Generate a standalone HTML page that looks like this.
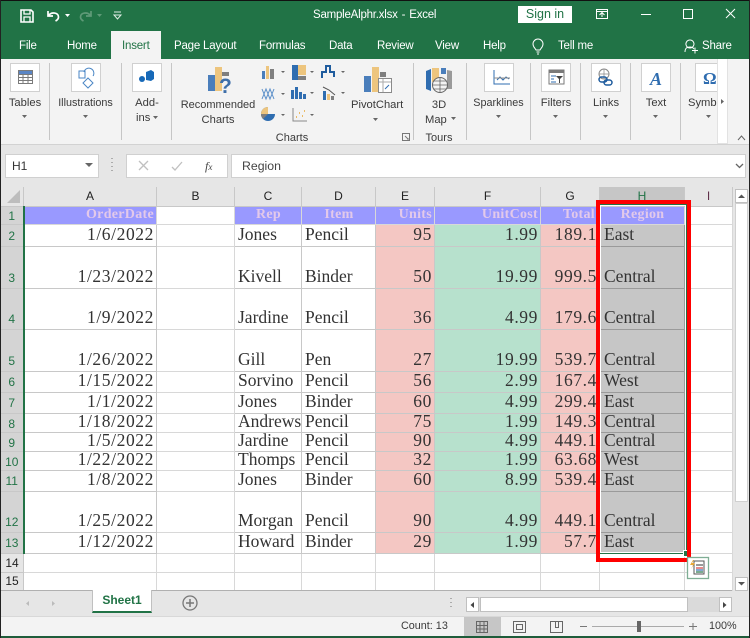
<!DOCTYPE html>
<html><head><meta charset="utf-8"><title>SampleAlphr.xlsx - Excel</title>
<style>
html,body{margin:0;padding:0}
body{width:750px;height:638px;overflow:hidden;position:relative;background:#e6e6e6;font-family:"Liberation Sans",sans-serif;color:#333}
.a{position:absolute}
.t{position:absolute;white-space:nowrap;font-size:11.2px;line-height:14px;color:#3a3a3a}
.g{color:#fff;font-size:11.5px;letter-spacing:-.2px}
.c{text-align:center}
.box{position:absolute;background:#fff;border:1px solid #d0d0d0;box-sizing:border-box;top:63px;height:29px}
.sep{position:absolute;top:63px;height:77px;width:1px;background:#c6c6c6}
table{position:absolute;left:0;top:187px;border-collapse:collapse;table-layout:fixed;width:732px}
td,th{padding:0;overflow:hidden;white-space:nowrap;box-sizing:border-box}
th{background:#e6e6e6;font:400 12px/14px "Liberation Sans",sans-serif;color:#222;border:1px solid #c8c8c8;border-top:0;text-align:center}
td{border:1px solid #d8d8d8;background:#fff;font:17.5px/15px "Liberation Serif",serif;color:#333;vertical-align:bottom;padding:0 1px 4px 3px}
td.r{text-align:right;letter-spacing:.6px;padding-right:2px}
tr.d td{border-color:#c8c8c8}
tr.d td.e,tr.h td.e{border-color:#d8d8d8}
tr.n td{padding-bottom:4px;line-height:14px}
td.p{background:#f4c7c3}
td.n{background:#b7e1cd}
td.s{background:#c6c6c6;border-color:#9a9a9a!important;padding-left:4px}
th.rh{background:#d4d4d4;color:#217346;font-size:12px;vertical-align:bottom;border-right:2px solid #217346;padding:0 0 3px 0}
th.rn{background:#e6e6e6;border-right:1px solid #c8c8c8;padding:0;color:#222;vertical-align:middle}
tr.h td{background:#9999ff;color:#e3c9ea;font:700 14px/15px "Liberation Serif",serif;padding:0 2px 1px 3px;letter-spacing:.3px;vertical-align:middle}
tr.h td.e{background:#fff}
tr.h td.c{text-align:center}
tr.h td.rr{text-align:right}
</style></head><body>
<!-- title bar -->
<div class="a" style="left:0;top:0;width:750px;height:59px;background:#217346;border-top:1px solid #111;box-sizing:border-box"></div>
<div class="a" style="left:0;top:0;width:1px;height:638px;background:#222;z-index:9"></div>
<div class="a" style="left:749px;top:0;width:1px;height:638px;background:#222;z-index:9"></div>
<div class="t g" style="left:313px;top:8px;font-size:11.5px;letter-spacing:-.22px;word-spacing:1px">SampleAlphr.xlsx&nbsp;- Excel</div>
<div class="a c" style="left:518px;top:6px;width:54px;height:17px;background:#fff;color:#217346;font-size:12.5px;line-height:17px">Sign in</div>
<div class="a" style="left:111px;top:31px;width:50px;height:29px;background:#f3f3f3"></div>
<div class="t g" style="left:19px;top:39px">File</div>
<div class="t g" style="left:67px;top:39px">Home</div>
<div class="t g" style="left:122px;top:39px;color:#217346">Insert</div>
<div class="t g" style="left:174px;top:39px">Page Layout</div>
<div class="t g" style="left:259px;top:39px">Formulas</div>
<div class="t g" style="left:329px;top:39px">Data</div>
<div class="t g" style="left:377px;top:39px">Review</div>
<div class="t g" style="left:435px;top:39px">View</div>
<div class="t g" style="left:483px;top:39px">Help</div>
<div class="t g" style="left:558px;top:39px">Tell me</div>
<div class="t g" style="left:702px;top:39px">Share</div>
<!-- ribbon -->
<div class="a" style="left:0;top:59px;width:750px;height:86px;background:#f3f3f3;border-bottom:1px solid #d2d2d2;box-sizing:border-box"></div>
<div class="sep" style="left:49px"></div><div class="sep" style="left:121px"></div><div class="sep" style="left:171px"></div>
<div class="sep" style="left:413px"></div><div class="sep" style="left:466px"></div><div class="sep" style="left:530px"></div>
<div class="sep" style="left:580px"></div><div class="sep" style="left:630px"></div><div class="sep" style="left:680px"></div>
<div class="box" style="left:10px;width:30px"></div>
<div class="box" style="left:71px;width:30px"></div>
<div class="box" style="left:132px;width:30px"></div>
<div class="box" style="left:484px;width:30px"></div>
<div class="box" style="left:541px;width:30px"></div>
<div class="box" style="left:591px;width:30px"></div>
<div class="box" style="left:641px;width:30px"></div>
<div class="box" style="left:695px;width:22px;border-right:0"></div>
<div class="a" style="left:0;top:1px;width:750px;height:0">
<div class="t c" style="left:0;width:50px;top:95px">Tables</div>
<div class="t c" style="left:50px;width:71px;top:95px;font-size:10.8px">Illustrations</div>
<div class="t c" style="left:122px;width:50px;top:95px">Add-</div>
<div class="t" style="left:136px;top:110px">ins</div>
<div class="t c" style="left:172px;width:92px;top:97px;font-size:11px">Recommended</div>
<div class="t c" style="left:172px;width:92px;top:112px">Charts</div>
<div class="t c" style="left:262px;width:60px;top:130px;font-size:11px">Charts</div>
<div class="t" style="left:351px;top:97px">PivotChart</div>
<div class="t c" style="left:414px;width:50px;top:97px">3D</div>
<div class="t" style="left:425px;top:112px">Map</div>
<div class="t c" style="left:414px;width:50px;top:130px;font-size:11px">Tours</div>
<div class="t c" style="left:467px;width:63px;top:95px;font-size:10.8px">Sparklines</div>
<div class="t c" style="left:531px;width:50px;top:95px">Filters</div>
<div class="t c" style="left:581px;width:50px;top:95px">Links</div>
<div class="t c" style="left:631px;width:50px;top:95px">Text</div>
<div class="t" style="left:688px;top:95px;width:29px;overflow:hidden">Symbols</div>
</div>
<div class="a" style="left:717px;top:59px;width:11px;height:85px;background:#fff;border:1px solid #e2e2e2;border-top:0;box-sizing:border-box"></div>
<!-- formula bar -->
<div class="a" style="left:5px;top:154px;width:94px;height:24px;background:#fff;border:1px solid #d0d0d0;box-sizing:border-box;font-size:12px;line-height:22px;padding-left:6px;color:#333">H1</div>
<div class="a" style="left:126px;top:154px;width:102px;height:24px;background:#fff;border:1px solid #d0d0d0;box-sizing:border-box"></div>
<div class="a" style="left:231px;top:154px;width:515px;height:24px;background:#fff;border:1px solid #d0d0d0;box-sizing:border-box;font-size:12.3px;line-height:22px;padding-left:10px;color:#444">Region</div>
<div class="t" style="left:205px;top:159px;font:italic 12px/14px 'Liberation Serif',serif;color:#444">f<span style="font-size:9px">x</span></div>
<!-- sheet -->
<table>
<colgroup><col style="width:23px"><col style="width:133px"><col style="width:78px"><col style="width:67px"><col style="width:74px"><col style="width:59px"><col style="width:106px"><col style="width:59px"><col style="width:85px"><col style="width:48px"></colgroup>
<tr style="height:19px"><th style="border-left:0"></th><th>A</th><th>B</th><th>C</th><th>D</th><th>E</th><th>F</th><th>G</th><th style="background:#c6c6c6;color:#217346">H</th><th style="color:#60304a">I</th></tr>
<tr class="h" style="height:18px"><th class="rh" style="padding-bottom:1px">1</th><td class="rr">OrderDate</td><td class="e"></td><td class="c">Rep</td><td class="c">Item</td><td class="rr">Units</td><td class="rr">UnitCost</td><td class="rr" style="padding-right:4px">Total</td><td class="c">Region</td><td class="e"></td></tr>
<tr class="d" style="height:22px"><th class="rh">2</th><td class="r">1/6/2022</td><td class="e"></td><td>Jones</td><td>Pencil</td><td class="r p">95</td><td class="r n">1.99</td><td class="r p">189.1</td><td class="s">East</td><td class="e"></td></tr>
<tr class="d" style="height:42px"><th class="rh">3</th><td class="r">1/23/2022</td><td class="e"></td><td>Kivell</td><td>Binder</td><td class="r p">50</td><td class="r n">19.99</td><td class="r p">999.5</td><td class="s">Central</td><td class="e"></td></tr>
<tr class="d" style="height:41px"><th class="rh">4</th><td class="r">1/9/2022</td><td class="e"></td><td>Jardine</td><td>Pencil</td><td class="r p">36</td><td class="r n">4.99</td><td class="r p">179.6</td><td class="s">Central</td><td class="e"></td></tr>
<tr class="d" style="height:42px"><th class="rh">5</th><td class="r">1/26/2022</td><td class="e"></td><td>Gill</td><td>Pen</td><td class="r p">27</td><td class="r n">19.99</td><td class="r p">539.7</td><td class="s">Central</td><td class="e"></td></tr>
<tr class="d" style="height:21px"><th class="rh">6</th><td class="r">1/15/2022</td><td class="e"></td><td>Sorvino</td><td>Pencil</td><td class="r p">56</td><td class="r n">2.99</td><td class="r p">167.4</td><td class="s">West</td><td class="e"></td></tr>
<tr class="d" style="height:21px"><th class="rh">7</th><td class="r">1/1/2022</td><td class="e"></td><td>Jones</td><td>Binder</td><td class="r p">60</td><td class="r n">4.99</td><td class="r p">299.4</td><td class="s">East</td><td class="e"></td></tr>
<tr class="d n" style="height:18px"><th class="rh" style="padding-bottom:1px">8</th><td class="r">1/18/2022</td><td class="e"></td><td>Andrews</td><td>Pencil</td><td class="r p">75</td><td class="r n">1.99</td><td class="r p">149.3</td><td class="s">Central</td><td class="e"></td></tr>
<tr class="d n" style="height:19px"><th class="rh" style="padding-bottom:1px">9</th><td class="r">1/5/2022</td><td class="e"></td><td>Jardine</td><td>Pencil</td><td class="r p">90</td><td class="r n">4.99</td><td class="r p">449.1</td><td class="s">Central</td><td class="e"></td></tr>
<tr class="d n" style="height:19px"><th class="rh" style="padding-bottom:1px">10</th><td class="r">1/22/2022</td><td class="e"></td><td>Thomps</td><td>Pencil</td><td class="r p">32</td><td class="r n">1.99</td><td class="r p">63.68</td><td class="s">West</td><td class="e"></td></tr>
<tr class="d" style="height:21px"><th class="rh">11</th><td class="r">1/8/2022</td><td class="e"></td><td>Jones</td><td>Binder</td><td class="r p">60</td><td class="r n">8.99</td><td class="r p">539.4</td><td class="s">East</td><td class="e"></td></tr>
<tr class="d" style="height:41px"><th class="rh">12</th><td class="r">1/25/2022</td><td class="e"></td><td>Morgan</td><td>Pencil</td><td class="r p">90</td><td class="r n">4.99</td><td class="r p">449.1</td><td class="s">Central</td><td class="e"></td></tr>
<tr class="d" style="height:21px"><th class="rh">13</th><td class="r">1/12/2022</td><td class="e"></td><td>Howard</td><td>Binder</td><td class="r p">29</td><td class="r n">1.99</td><td class="r p">57.7</td><td class="s">East</td><td class="e"></td></tr>
<tr style="height:19px"><th class="rn">14</th><td></td><td></td><td></td><td></td><td></td><td></td><td></td><td></td><td></td></tr>
<tr style="height:18px"><th class="rn">15</th><td></td><td></td><td></td><td></td><td></td><td></td><td></td><td></td><td></td></tr>
</table>
<!-- selection & red box -->
<div class="a" style="left:599px;top:204px;width:88px;height:350px;border:1px solid #217346;outline:1px solid #fff;outline-offset:-2px;box-sizing:border-box"></div>
<div class="a" style="left:683px;top:550px;width:5px;height:5px;background:#217346;border:1px solid #fff"></div>
<div class="a" style="left:596px;top:200px;width:95px;height:362px;border:4px solid #f00;box-sizing:border-box"></div>
<!-- v scrollbar -->
<div class="a" style="left:735px;top:189px;width:13px;height:14px;background:#fff;border:1px solid #c0c0c0;box-sizing:border-box"></div>
<div class="a" style="left:735px;top:203px;width:13px;height:299px;background:#fff;border:1px solid #d0d0d0;box-sizing:border-box"></div>
<div class="a" style="left:735px;top:577px;width:13px;height:14px;background:#fff;border:1px solid #c0c0c0;box-sizing:border-box"></div>
<!-- sheet tabs -->
<div class="a" style="left:1px;top:590px;width:731px;height:1px;background:#b0b0b0"></div>
<div class="a" style="left:92px;top:590px;width:60px;height:23px;background:#fff;border:1px solid #c0c0c0;border-top:0;border-bottom:2px solid #217346;box-sizing:border-box;color:#217346;font-weight:700;font-size:12px;line-height:21px;text-align:center">Sheet1</div>
<div class="a" style="left:466px;top:597px;width:266px;height:15px;background:#dadada"></div>
<div class="a" style="left:466px;top:597px;width:13px;height:15px;background:#fff;border:1px solid #c0c0c0;box-sizing:border-box"></div>
<div class="a" style="left:480px;top:597px;width:208px;height:15px;background:#fff;border:1px solid #c0c0c0;box-sizing:border-box"></div>
<div class="a" style="left:719px;top:597px;width:13px;height:15px;background:#fff;border:1px solid #c0c0c0;box-sizing:border-box"></div>
<!-- status bar -->
<div class="a" style="left:0;top:616px;width:750px;height:22px;background:#f3f3f3;border-top:1px solid #d8d8d8;border-bottom:2px solid #1e5c3a;box-sizing:border-box"></div>
<div class="a" style="left:464px;top:617px;width:37px;height:19px;background:#c6c6c6"></div>
<div class="t" style="left:401px;top:619px;font-size:10.8px">Count: 13</div>
<div class="t" style="left:709px;top:619px;font-size:10.8px">100%</div>
<!-- icons -->
<svg class="a" style="left:0;top:0;z-index:5" width="750" height="638" viewBox="0 0 750 638" fill="none">
<!-- save -->
<path d="M21 10h10l2 2v10H21z" stroke="#fff" stroke-width="1.6"/><path d="M24 10v4h6v-4M24 22v-5h6v5" stroke="#fff" stroke-width="1.3"/>
<!-- undo -->
<path d="M48 11v5h5M48.500 15.500c3-4 10-3 10 1.500 0 2-1 3-3 4" stroke="#fff" stroke-width="1.7"/>
<path d="M65 14h5l-2.500 3z" fill="#fff"/>
<path d="M91 11v5h-5M90.500 15.500c-3-4-10-3-10 1.500 0 2 1 3 3 4" stroke="#5f9a78" stroke-width="1.7"/>
<path d="M97 14h5l-2.500 3z" fill="#5f9a78"/>
<path d="M114 12h7M114 15h7l-3.500 4z" stroke="#dfeee6"/>
<!-- window buttons -->
<path d="M596.500 9.500h11v9h-11zM596.500 11.500h11" stroke="#fff"/><path d="M602 17v-4M599.500 15l2.500-2.500 2.500 2.500" stroke="#fff"/>
<path d="M641 14.500h10" stroke="#fff"/><path d="M683.500 9.500h9v9h-9z" stroke="#fff"/><path d="M726 9l9 9M735 9l-9 9" stroke="#fff"/>
<!-- bulb -->
<path d="M536 50c-1-2-3-3-3-6a5 5 0 0 1 10 0c0 3-2 4-3 6zM536.500 52h3M537 54h2" stroke="#fff"/>
<!-- share person -->
<path d="M690 40a4 4 0 1 1 -.1 0zM685 52c0-4 2-5 5-5 2 0 3 .5 4 2M692 50.500h6M695 47.500v6" stroke="#fff"/>
<!-- tables icon -->
<path d="M18 70h15v4H18z" fill="#5a85c4"/><path d="M18.500 70.500h14v13h-14zM18.500 74.500h14M18.500 77.500h14M18.500 80.500h14M23 74v10M28 74v10" stroke="#7a7a7a"/>
<!-- illustrations icon -->
<path d="M79 72h6v7h-6zM88 79l5 5-5 5-5-5z M84 73a5 5 0 1 1 9 4" stroke="#4a86c5" stroke-width="1" transform="translate(0,-1)"/>
<!-- addins -->
<path d="M146 72l5-2 3 2v7l-3 2-5-1z" fill="#1769b8"/><circle cx="142" cy="79" r="3" fill="#1769b8"/>
<!-- recommended charts -->
<rect x="208" y="75" width="7" height="16" fill="#4a7ebb"/><rect x="215" y="67" width="7" height="24" fill="#edc57e"/><rect x="222" y="72" width="7" height="4" fill="#7f7f7f"/>
<text x="219" y="93" font-family="Liberation Sans" font-size="21" font-weight="700" fill="#3f6fa8">?</text>
<!-- small charts -->
<path d="M262 71h3v8h-3z" fill="#4a7ebb"/><path d="M266 66h3v13h-3z" fill="#edc57e"/><path d="M270 69h4v10h-4z" fill="#7f7f7f"/><path d="M281 71h4l-2 2z" fill="#666"/>
<path d="M292 65h6v15h-6z" fill="#2f6db0"/><path d="M298 65h8v10h-8z" fill="#edc57e"/><path d="M298 76h8v4h-8z" fill="#7f7f7f"/><path d="M310 71h4l-2 2z" fill="#666"/>
<path d="M322 78v-6h4v-6h4v6h4v5" stroke="#1f5c9e" stroke-width="2"/><path d="M341 71h4l-2 2z" fill="#666"/>
<path d="M262 89l4 10 4-10 4 10M262 99l4-10 4 10 4-10" stroke="#5b8fc9"/><path d="M281 93h4l-2 2z" fill="#666"/>
<path d="M291 90h3v9h-3zM295 87h3v12h-3zM299 92h3v7h-3zM303 94h3v5h-3z" fill="#2f6db0"/><path d="M310 92h4l-2 2z" fill="#666"/>
<path d="M323 91h3v9h-3z" fill="#2f6db0"/><path d="M327 94h3v6h-3z" fill="#edc57e"/><path d="M331 96h3v4h-3z" fill="#7f7f7f"/><path d="M323 87l6 3 6 5" stroke="#555"/><path d="M341 92h4l-2 2z" fill="#666"/>
<path d="M268 107a7 7 0 1 0 7 7h-7z" fill="#2f6db0"/><path d="M268 107v7h-7a7 7 0 0 1 7-7z" fill="#edc57e"/><path d="M261 114h7l-5 5a7 7 0 0 1 -2-5z" fill="#7f7f7f"/><path d="M281 114h4l-2 2z" fill="#666"/>
<path d="M293 108v13h14" stroke="#888"/><path d="M296 117h1M299 113h1M302 116h1M304 111h1" stroke="#e8a838" stroke-width="1.500"/><path d="M310 114h4l-2 2z" fill="#666"/>
<!-- pivot chart -->
<rect x="364" y="76" width="7" height="16" fill="#4a7ebb"/><rect x="372" y="67" width="7" height="25" fill="#edc57e"/><rect x="380" y="72" width="6" height="5" fill="#7f7f7f"/>
<rect x="378.500" y="78.500" width="13" height="14" fill="#fff" stroke="#8a8a8a"/><path d="M379 82h12M383 79v13" stroke="#aaa"/><path d="M385 89l4-4" stroke="#2f6db0"/>
<!-- 3d map -->
<path d="M426 71l5-2v22l-5-2z" fill="#2f6db0"/><path d="M432 68h7v14h-7z" fill="#edc57e"/><path d="M447 70l5 1v18h-5z" fill="#9a9a9a"/><path d="M441 68h5v6h-5z" fill="#4a7ebb"/>
<circle cx="440" cy="85" r="7.500" fill="#f3f3f3" stroke="#666"/><path d="M433 85h14M440 78v14M434 81h12M434 89h12" stroke="#666" stroke-width=".8"/>
<!-- sparklines -->
<path d="M494 70v14h16M497 80l3-3 3 3 3-3 3 2" stroke="#2f6db0"/><path d="M494 78h16" stroke="#8a8a8a"/>
<!-- filters -->
<rect x="549" y="70" width="15" height="14" fill="#fff" stroke="#7a7a7a"/><rect x="549" y="70" width="15" height="3" fill="#7a7a7a"/><path d="M551 76h5M551 79h3M551 82h5" stroke="#2f6db0"/><path d="M556 76h7l-3 3v4h-1v-4z" fill="#444"/>
<!-- links -->
<circle cx="604" cy="74" r="5" stroke="#888"/><path d="M599 74h10M604 69v10" stroke="#888" stroke-width=".7"/>
<rect x="599" y="77" width="8" height="5" rx="2.500" stroke="#1f5c9e" stroke-width="1.500"/><rect x="604" y="80" width="8" height="5" rx="2.500" stroke="#1f5c9e" stroke-width="1.500"/>
<!-- text A -->
<text x="650" y="85" font-family="Liberation Serif" font-size="18" font-style="italic" font-weight="700" fill="#2f6db0">A</text>
<!-- omega -->
<text x="703" y="84" font-family="Liberation Serif" font-size="17" font-weight="700" fill="#2f6db0">Ω</text>
<!-- ribbon carets -->
<g fill="#666"><path d="M22 115h5l-2.500 3zM83 115h5l-2.500 3zM153 116h5l-2.500 3zM373 118h5l-2.500 3zM451 117h5l-2.500 3zM496 115h5l-2.500 3zM553 115h5l-2.500 3zM603 115h5l-2.500 3zM653 115h5l-2.500 3zM706 115h5l-2.500 3z"/><path d="M721 99l3 2.500-3 2.500z"/></g>
<path d="M738 140l3.500-4 3.500 4" stroke="#666"/>
<path d="M402.500 133.500h7v7h-7zM405 136l3 3M409 139h-2" stroke="#777"/>
<!-- formula bar icons -->
<path d="M85 163h8l-4 4z" fill="#666"/>
<path d="M112 158v1M112 162v1M112 166v1M112 170v1" stroke="#999" stroke-width="1.500"/>
<path d="M139 161l9 9M148 161l-9 9" stroke="#c0c0c0" stroke-width="1.300"/>
<path d="M172 167l3 3 7-8" stroke="#c0c0c0" stroke-width="1.300"/>
<path d="M736 164l3.500 3.500 3.500-3.500" stroke="#666" stroke-width="1.300"/>
<!-- corner triangle -->
<path d="M20 190v13H7z" fill="#bdbdbd"/>
<!-- scroll arrows -->
<path d="M738 198l3.500-3.500 3.500 3.500z" fill="#555"/><path d="M738 582l3.500 3.500 3.500-3.500z" fill="#555"/>
<path d="M474 602v6l-3.500-3z" fill="#444"/><path d="M723 602v6l3.500-3z" fill="#444"/>
<path d="M29 601v5l-3-2.500z" fill="#bbb"/><path d="M52 601v5l3-2.500z" fill="#bbb"/>
<path d="M451 598v1M451 602v1M451 606v1" stroke="#999" stroke-width="1.500"/>
<!-- add sheet -->
<circle cx="190" cy="603" r="7" stroke="#777" stroke-width="1.300"/><path d="M186 603h8M190 599v8" stroke="#777" stroke-width="1.500"/>
<!-- quick analysis -->
<rect x="687.500" y="557.500" width="21" height="21" fill="#fff" stroke="#7fae95" stroke-width="1.300"/>
<path d="M694 561h10v13h-10z" stroke="#555"/><path d="M696 565h7" stroke="#555" stroke-width="1.200"/><path d="M696 568h7" stroke="#d83b3b" stroke-width="1.200"/><path d="M696 570h7" stroke="#2f6db0" stroke-width="1.200"/><path d="M696 572h7" stroke="#217346" stroke-width="1.200"/>
<path d="M693 560l-3 5h3l-2 4 4-6h-3l2-3z" fill="#e8a838"/>
<!-- status icons -->
<path d="M476.500 621.500h11v11h-11zM476.500 625.500h11M476.500 629h11M480 621v11M484 621v11" stroke="#666"/>
<path d="M513.500 621.500h12v11h-12zM516.500 624.500h6v5h-6z" stroke="#666"/>
<path d="M550.500 621.500h12v11h-12zM555.500 621.500v6h3v-6" stroke="#666"/>
<path d="M580 626.500h7M689 626.500h8M693 623v7" stroke="#777"/><path d="M592 626.500h92" stroke="#aaa"/>
<rect x="637" y="621" width="4" height="11" fill="#666"/>
</svg>
</body></html>
